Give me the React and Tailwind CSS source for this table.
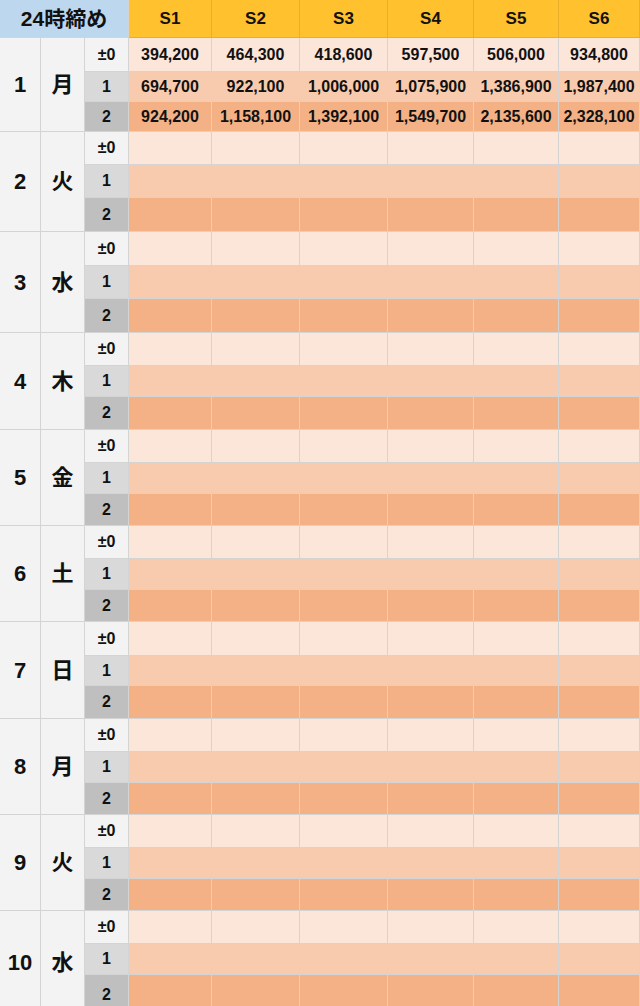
import { Fragment } from 'react';

const COLS = 'grid grid-cols-[41px_44px_44px_83px_88px_88px_86px_85px_81px]';

const DAYS = [
  { n: '1', d: '月', rows: 'grid-rows-[34px_30px_30px]' },
  { n: '2', d: '火', rows: 'grid-rows-[33px_33px_34px]' },
  { n: '3', d: '水', rows: 'grid-rows-[34px_33px_34px]' },
  { n: '4', d: '木', rows: 'grid-rows-[33px_31px_33px]' },
  { n: '5', d: '金', rows: 'grid-rows-[33px_31px_32px]' },
  { n: '6', d: '土', rows: 'grid-rows-[33px_31px_32px]' },
  { n: '7', d: '日', rows: 'grid-rows-[34px_30px_33px]' },
  { n: '8', d: '月', rows: 'grid-rows-[33px_31px_32px]' },
  { n: '9', d: '火', rows: 'grid-rows-[33px_31px_32px]' },
  { n: '10', d: '水', rows: 'grid-rows-[33px_31px_40px]' },
];

const VALUES = {
  '1': [
    ['394,200', '464,300', '418,600', '597,500', '506,000', '934,800'],
    ['694,700', '922,100', '1,006,000', '1,075,900', '1,386,900', '1,987,400'],
    ['924,200', '1,158,100', '1,392,100', '1,549,700', '2,135,600', '2,328,100'],
  ],
};

const LEVELS = [
  { label: '±0', labelBg: 'bg-[#f3f3f3]', cellBg: 'bg-[#fce5d9]' },
  { label: '1', labelBg: 'bg-[#d9d9d9]', cellBg: 'bg-[#f8cbae]' },
  { label: '2', labelBg: 'bg-[#bfbfbf]', cellBg: 'bg-[#f4b185]' },
];

const cell = 'flex items-center justify-center border-r border-b border-[#d4d4d4]';

// one day = 3 rows; day number and weekday span all three
const DayGroup = ({ day }) => {
  const values = VALUES[day.n];
  return (
    <div className={`${COLS} ${day.rows}`}>
      <div className={`${cell} row-span-3 bg-[#f3f3f3] text-[22px]`}>{day.n}</div>
      <div className={`${cell} row-span-3 bg-[#f3f3f3] text-[22px]`}>{day.d}</div>
      {LEVELS.map((lv, i) => (
        <Fragment key={lv.label}>
          <div className={`${cell} ${lv.labelBg} text-[16px]`}>{lv.label}</div>
          {[0, 1, 2, 3, 4, 5].map((c) => (
            <div key={c} className={`${cell} ${lv.cellBg} text-[16px]`}>
              {values ? values[i][c] : ''}
            </div>
          ))}
        </Fragment>
      ))}
    </div>
  );
};

export default function App() {
  return (
    <div
      className="w-[640px] h-[1006px] overflow-hidden bg-white font-bold text-[#111]"
      style={{ fontFamily: '"Liberation Sans", "Noto Sans CJK JP", sans-serif' }}
    >
      {/* Header */}
      <div className={`${COLS} h-[38px]`}>
        <div className="col-span-3 flex items-center justify-center bg-[#bdd7ee] border-b border-r border-[#d4d4d4] text-[21px]">
          24時締め
        </div>
        {['S1', 'S2', 'S3', 'S4', 'S5', 'S6'].map((s) => (
          <div key={s} className="flex items-center justify-center bg-[#ffc12d] border-b border-r border-[#e8b02a] text-[17px]">
            {s}
          </div>
        ))}
      </div>

      {DAYS.map((day) => (
        <DayGroup key={day.n} day={day} />
      ))}
    </div>
  );
}
